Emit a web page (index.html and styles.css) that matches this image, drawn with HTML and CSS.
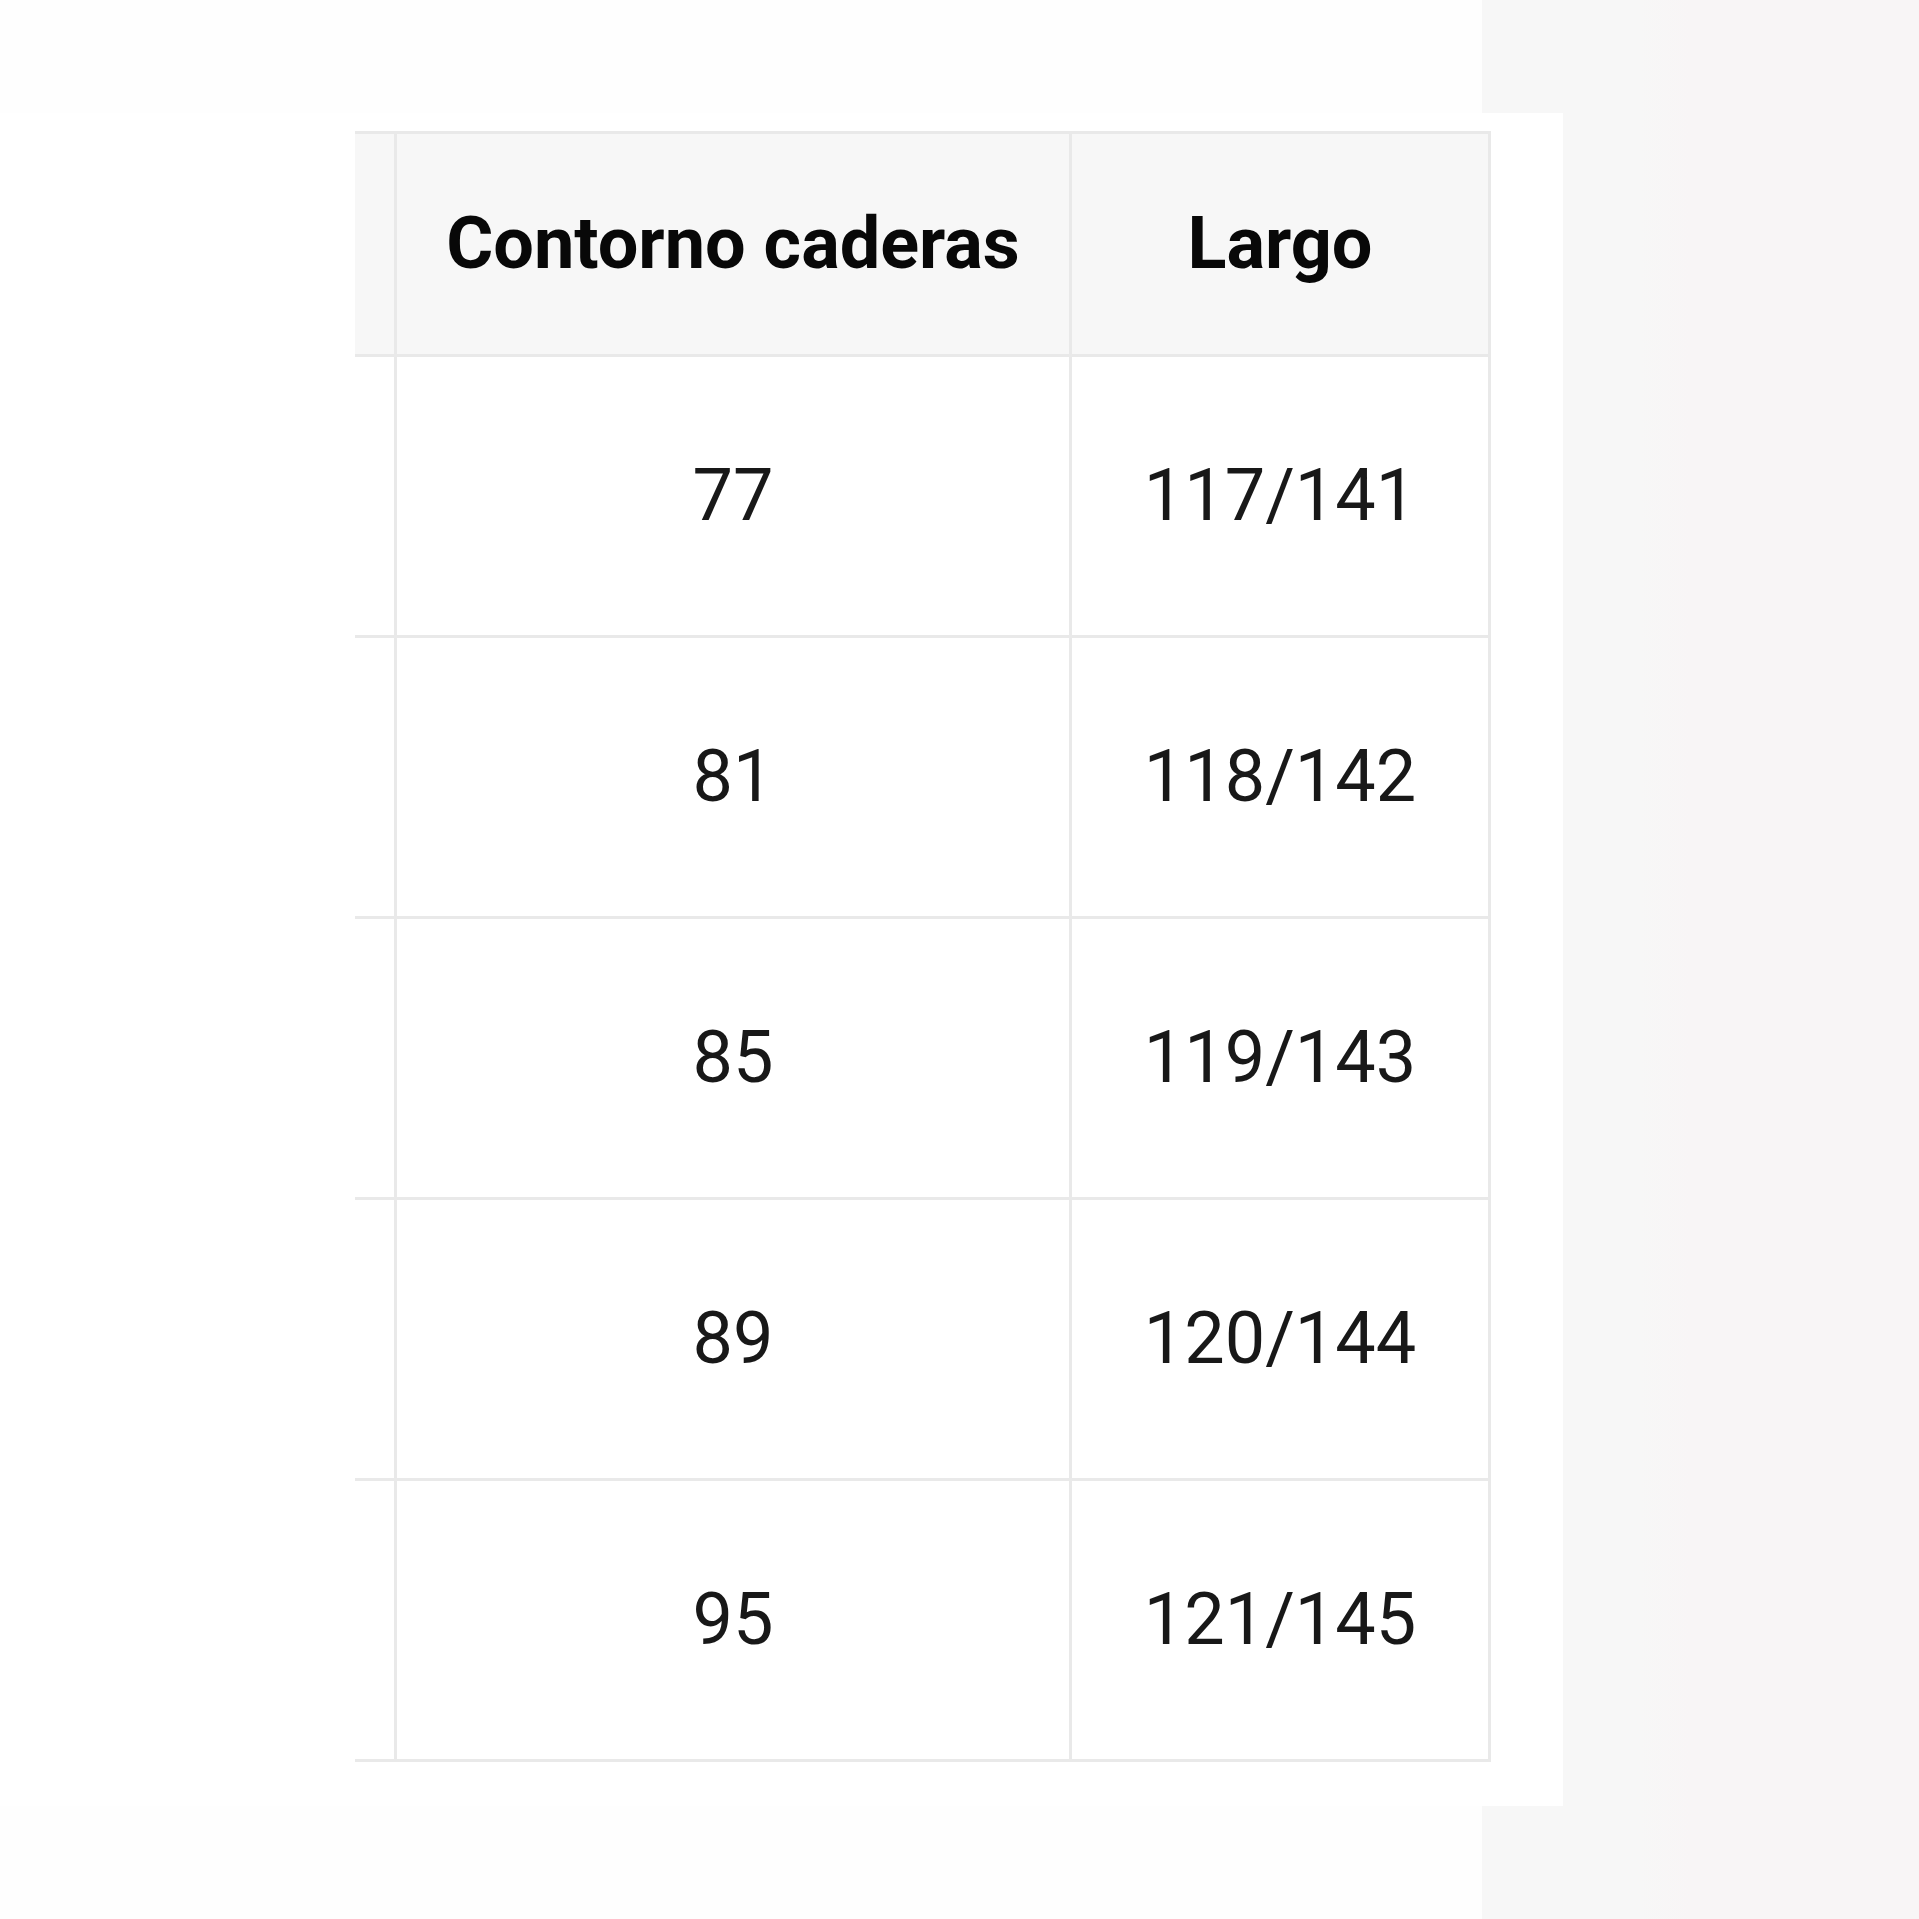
FILE: index.html
```html
<!DOCTYPE html>
<html lang="es">
<head>
<meta charset="utf-8">
<title>Tabla de medidas</title>
<link rel="stylesheet" href="styles.css">
</head>
<body>
<div class="page">
  <div class="shade shade-top"></div>
  <div class="shade shade-side"></div>
  <div class="shade shade-bottom"></div>
  <div class="sheet">
    <table class="sizes">
      <thead>
        <tr class="head-row">
          <th class="stub"></th>
          <th class="col-hip">Contorno caderas</th>
          <th class="col-len">Largo</th>
        </tr>
      </thead>
      <tbody>
        <tr class="body-row"><td class="stub"></td><td>77</td><td>117/141</td></tr>
        <tr class="body-row"><td class="stub"></td><td>81</td><td>118/142</td></tr>
        <tr class="body-row"><td class="stub"></td><td>85</td><td>119/143</td></tr>
        <tr class="body-row"><td class="stub"></td><td>89</td><td>120/144</td></tr>
        <tr class="body-row"><td class="stub"></td><td>95</td><td>121/145</td></tr>
      </tbody>
    </table>
  </div>
</div>
</body>
</html>
```

FILE: styles.css
```css
html, body {
  margin: 0;
  padding: 0;
  background: #fefefe;
}

.page {
  display: grid;
  grid-template-columns: 1482px 81px 1fr;
  grid-template-rows: 113px 1693px 1fr;
  width: 1919px;
  height: 1919px;
  font-family: Roboto, "Liberation Sans", Arial, sans-serif;
}

.shade {
  background: linear-gradient(to right, #f7f7f7 0, #f7f7f7 1640px, #f8f5f6 1690px, #f8f5f6 100%);
  background-attachment: fixed;
}

.shade-top {
  grid-column: 2 / 4;
  grid-row: 1;
}

.shade-side {
  grid-column: 3;
  grid-row: 2;
}

.shade-bottom {
  grid-column: 2 / 4;
  grid-row: 3;
}

.sheet {
  grid-column: 1 / 3;
  grid-row: 2;
  background: #ffffff;
  padding: 18px 0 0 355px;
}

.sizes {
  border-collapse: separate;
  border-spacing: 0;
  table-layout: fixed;
  width: 1136px;
  border-top: 3px solid #e9e9e9;
}

.sizes th,
.sizes td {
  box-sizing: border-box;
  padding: 0;
  text-align: center;
  vertical-align: middle;
  border-right: 3px solid #e9e9e9;
  border-bottom: 3px solid #e9e9e9;
  font-size: 72px;
  line-height: 1.17;
}

.sizes th {
  background: #f7f7f7;
  font-weight: 700;
  color: #080808;
}

.sizes td {
  background: #ffffff;
  font-weight: 400;
  color: #181818;
}

.sizes .stub {
  width: 42px;
}

.sizes .col-hip {
  width: 675px;
}

.sizes .col-len {
  width: 419px;
}

.head-row {
  height: 223px;
}

.body-row {
  height: 281px;
}
```
